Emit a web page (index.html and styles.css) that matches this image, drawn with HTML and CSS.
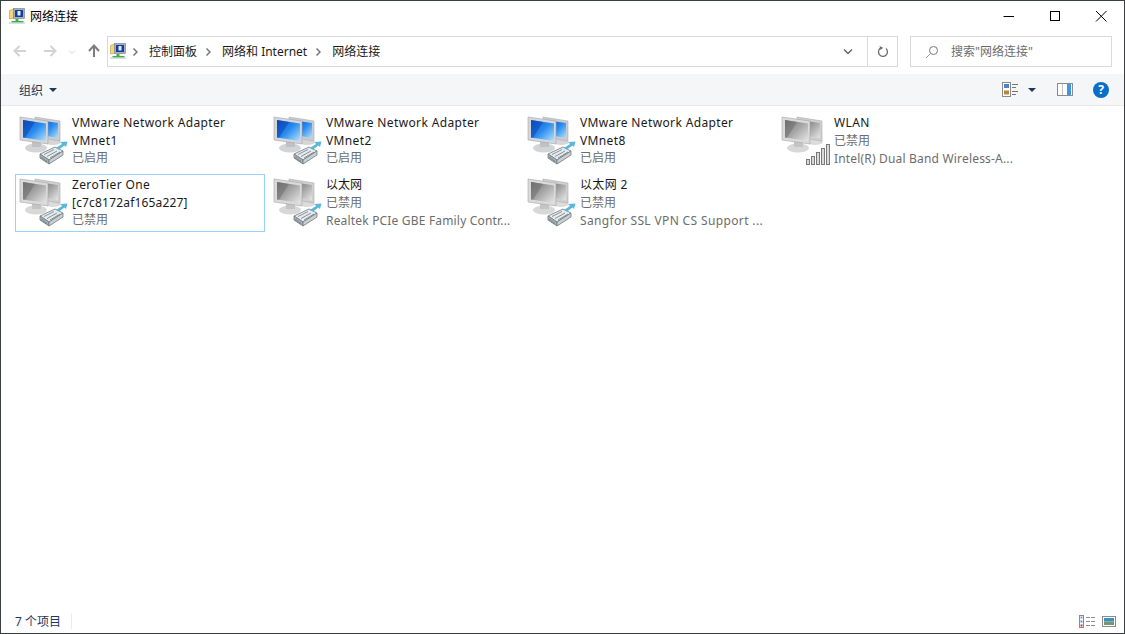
FILE: index.html
```html
<!DOCTYPE html>
<html lang="zh-CN">
<head>
    <meta charset="UTF-8">
    <title>网络连接</title>
    <link rel="stylesheet" href="styles.css">
</head>
<body>
    <!-- shared icons -->
    <svg class="defs" width="0" height="0">
        <defs>
            <linearGradient id="screenBlue" x1="0" y1="0" x2="1" y2="1">
                <stop offset="0" stop-color="#0a4fc4"/>
                <stop offset="0.5" stop-color="#2a8cf0"/>
                <stop offset="1" stop-color="#b4e2fb"/>
            </linearGradient>
            <linearGradient id="screenGray" x1="0" y1="0" x2="1" y2="1">
                <stop offset="0" stop-color="#6f6f6f"/>
                <stop offset="0.5" stop-color="#a8a8a8"/>
                <stop offset="1" stop-color="#e6e6e6"/>
            </linearGradient>
            <symbol id="pcBlue" viewBox="0 0 56 56">
                <ellipse cx="36" cy="29" rx="8" ry="3" fill="#d4d6d8"/>
                <path d="M18 4 L43 8 V28 L18 24 Z" fill="#c9ccd0" stroke="#a9adb2" stroke-width="0.6"/>
                <path d="M24 7.500 L41 10 V25 L24 22 Z" fill="url(#screenBlue)"/>
                <ellipse cx="19" cy="35" rx="11" ry="4.500" fill="#d2d4d6"/>
                <path d="M15 28 h9 v6 h-9 Z" fill="#bfc2c5"/>
                <path d="M3 4 L31 8 V31 L3 27 Z" fill="#d4d6d9" stroke="#a2a6ab" stroke-width="0.6"/>
                <path d="M6 7 L29 10.500 V28 L6 24.500 Z" fill="url(#screenBlue)"/>
                <path d="M6 7 L18 9 L8 24.800 L6 24.500 Z" fill="#0b46b4" opacity="0.55"/>
            </symbol>
            <symbol id="pcGray" viewBox="0 0 56 56">
                <ellipse cx="36" cy="29" rx="8" ry="3" fill="#dcdcdc"/>
                <path d="M18 4 L43 8 V28 L18 24 Z" fill="#d0d0d0" stroke="#ababab" stroke-width="0.6"/>
                <path d="M24 7.500 L41 10 V25 L24 22 Z" fill="url(#screenGray)"/>
                <ellipse cx="19" cy="35" rx="11" ry="4.500" fill="#d8d8d8"/>
                <path d="M15 28 h9 v6 h-9 Z" fill="#c4c4c4"/>
                <path d="M3 4 L31 8 V31 L3 27 Z" fill="#dadada" stroke="#a6a6a6" stroke-width="0.6"/>
                <path d="M6 7 L29 10.500 V28 L6 24.500 Z" fill="url(#screenGray)"/>
                <path d="M6 7 L18 9 L8 24.800 L6 24.500 Z" fill="#707070" opacity="0.55"/>
            </symbol>
            <symbol id="plug" viewBox="0 0 56 56">
                <path d="M23 41 L38 34 L46 38 L32 47 Z" fill="#e6ebee" stroke="#6f7a80" stroke-width="0.8"/>
                <path d="M23 41 V45 L32 51 V47 Z" fill="#aab2b7" stroke="#6f7a80" stroke-width="0.8"/>
                <path d="M32 47 V51 L46 42 V38 Z" fill="#c9d0d4" stroke="#6f7a80" stroke-width="0.8"/>
                <path d="M27 41.500 L37 36.500 M30 43.500 L40 38 M33 45 L43 39" stroke="#6f7a80" stroke-width="0.8" fill="none"/>
                <path d="M25 44 v2 M27 45.500 v2 M29 47 v2" stroke="#5d676d" stroke-width="0.8" fill="none"/>
                <path d="M39 35 L45 31 L43.500 29 L50.500 28.500 L49 34 L47.500 32.500 L42 36.500 Z" fill="#59b7de"/>
            </symbol>
            <symbol id="signal" viewBox="0 0 56 56">
                <g fill="#d9d9d9" stroke="#7a7a7a" stroke-width="1">
                    <rect x="27.500" y="46.500" width="3" height="5"/>
                    <rect x="32.500" y="43.500" width="3" height="8"/>
                    <rect x="37.500" y="39.500" width="3" height="12"/>
                    <rect x="42.500" y="35.500" width="3" height="16"/>
                    <rect x="47.500" y="31.500" width="3" height="20"/>
                </g>
            </symbol>
            <symbol id="netSmall" viewBox="0 0 16 16">
                <path d="M0.500 2.500 L5 1 V10 L0.500 11 Z" fill="#f4d774" stroke="#b89a3c" stroke-width="0.6"/>
                <rect x="4.500" y="0.500" width="11" height="10" fill="#a9aeb6" stroke="#757c86" stroke-width="0.6"/>
                <rect x="6" y="2" width="8" height="7" fill="#123e9c"/>
                <rect x="8.500" y="3" width="3" height="4.500" fill="#dfe9f7"/>
                <path d="M6.500 11 h3 v2 h5 v1.500 h-12 v-1.500 h4 Z" fill="#37b24d"/>
                <rect x="0" y="14.500" width="16" height="1.200" fill="#b8bcc0" opacity="0.7"/>
            </symbol>
            <symbol id="chev" viewBox="0 0 6 8">
                <path d="M1.500 0.500 L5 4 L1.500 7.500" fill="none" stroke="#777" stroke-width="1.500"/>
            </symbol>
        </defs>
    </svg>

    <div class="window">
        <div class="titlebar">
            <svg class="small-icon"><use href="#netSmall"/></svg>
            <span class="title">网络连接</span>
            <div class="win-btns">
                <svg class="win-btn" viewBox="0 0 46 30"><path d="M17.500 15.500 H28" stroke="#000" fill="none"/></svg>
                <svg class="win-btn" viewBox="0 0 46 30"><rect x="18.500" y="10.500" width="9" height="9" stroke="#000" fill="none"/></svg>
                <svg class="win-btn" viewBox="0 0 46 30"><path d="M18 10 L28.500 20.500 M28.500 10 L18 20.500" stroke="#000" fill="none"/></svg>
            </div>
        </div>

        <div class="navbar">
            <div class="nav-btns">
                <svg class="nav-arrow" viewBox="0 0 16 16"><path d="M14 8 H3 M7.500 3 L2.500 8 L7.500 13" class="arrow-off"/></svg>
                <svg class="nav-arrow" viewBox="0 0 16 16"><path d="M2 8 H13 M8.500 3 L13.500 8 L8.500 13" class="arrow-off"/></svg>
                <svg class="nav-drop" viewBox="0 0 8 8"><path d="M1 2.500 L4 5.500 L7 2.500" class="arrow-off thin"/></svg>
                <svg class="nav-arrow up" viewBox="0 0 16 16"><path d="M8 14 V3 M3 8 L8 2.500 L13 8" class="arrow-on"/></svg>
            </div>
            <div class="address">
                <svg class="small-icon"><use href="#netSmall"/></svg>
                <svg class="crumb-sep first"><use href="#chev"/></svg>
                <span class="crumb">控制面板</span>
                <svg class="crumb-sep"><use href="#chev"/></svg>
                <span class="crumb">网络和 Internet</span>
                <svg class="crumb-sep"><use href="#chev"/></svg>
                <span class="crumb">网络连接</span>
                <svg class="addr-drop" viewBox="0 0 10 8"><path d="M1 1.500 L5 5.500 L9 1.500" fill="none" stroke="#666" stroke-width="1.500"/></svg>
                <div class="refresh">
                    <svg viewBox="0 0 12 12" width="12" height="12"><path d="M4 1.800 A4.500 4.500 0 1 0 9 2.500" fill="none" stroke="#6d6d6d" stroke-width="1.300"/><path d="M2.500 0 L6 1.800 L3.500 4 Z" fill="#6d6d6d"/></svg>
                </div>
            </div>
            <div class="search">
                <svg class="search-icon" viewBox="0 0 14 14"><circle cx="8.500" cy="5.500" r="4" fill="none" stroke="#777"/><path d="M5.500 8.500 L1 13" stroke="#999" fill="none"/></svg>
                <span class="search-text">搜索"网络连接"</span>
            </div>
        </div>

        <div class="toolbar">
            <span class="org">组织</span>
            <span class="caret"></span>
            <div class="tool-right">
                <svg class="tool-views" viewBox="0 0 17 15">
                    <rect x="0.500" y="0.500" width="8" height="14" fill="#fff" stroke="#8b8b8b"/>
                    <rect x="2" y="2" width="5" height="4" fill="#4a86c5"/>
                    <rect x="2" y="8.500" width="5" height="4" fill="#b5893c"/>
                    <path d="M10 2.500 H16 M10 5.500 H14 M10 9.500 H16 M10 12.500 H14" stroke="#777"/>
                </svg>
                <span class="caret view-caret"></span>
                <svg class="tool-pane" viewBox="0 0 16 13">
                    <rect x="0.500" y="0.500" width="15" height="12" fill="#fff" stroke="#8b8b8b"/>
                    <rect x="10" y="1" width="4" height="11" fill="#3f95e6"/>
                    <path d="M5.500 1 V12" stroke="#c4c4c4"/>
                </svg>
                <div class="help">?</div>
            </div>
        </div>

        <div class="items">
            <div class="item">
                <div class="item-icon"><svg><use href="#pcBlue"/><use href="#plug"/></svg></div>
                <div class="item-text"><div class="name wide">VMware Network Adapter</div><div class="name wide">VMnet1</div><div class="sub">已启用</div></div>
            </div>
            <div class="item">
                <div class="item-icon"><svg><use href="#pcBlue"/><use href="#plug"/></svg></div>
                <div class="item-text"><div class="name wide">VMware Network Adapter</div><div class="name wide">VMnet2</div><div class="sub">已启用</div></div>
            </div>
            <div class="item">
                <div class="item-icon"><svg><use href="#pcBlue"/><use href="#plug"/></svg></div>
                <div class="item-text"><div class="name wide">VMware Network Adapter</div><div class="name wide">VMnet8</div><div class="sub">已启用</div></div>
            </div>
            <div class="item">
                <div class="item-icon"><svg><use href="#pcGray"/><use href="#signal"/></svg></div>
                <div class="item-text"><div class="name wide">WLAN</div><div class="sub">已禁用</div><div class="sub tight detail">Intel(R) Dual Band Wireless-A...</div></div>
            </div>
            <div class="item selected">
                <div class="item-icon"><svg><use href="#pcGray"/><use href="#plug"/></svg></div>
                <div class="item-text"><div class="name wide">ZeroTier One</div><div class="name tight">[c7c8172af165a227]</div><div class="sub">已禁用</div></div>
            </div>
            <div class="item">
                <div class="item-icon"><svg><use href="#pcGray"/><use href="#plug"/></svg></div>
                <div class="item-text"><div class="name">以太网</div><div class="sub">已禁用</div><div class="sub tight detail">Realtek PCIe GBE Family Contr...</div></div>
            </div>
            <div class="item">
                <div class="item-icon"><svg><use href="#pcGray"/><use href="#plug"/></svg></div>
                <div class="item-text"><div class="name wide">以太网 2</div><div class="sub">已禁用</div><div class="sub wide detail">Sangfor SSL VPN CS Support ...</div></div>
            </div>
        </div>

        <div class="statusbar">
            <span class="count">7 个项目</span>
            <span class="status-sep"></span>
            <div class="status-right">
                <svg class="status-details" viewBox="0 0 16 13">
                    <rect x="0.500" y="0.500" width="4" height="12" fill="#fff" stroke="#8b8b8b"/>
                    <rect x="1.500" y="1.500" width="2" height="2" fill="#9a9a9a"/>
                    <rect x="1.500" y="5.500" width="2" height="2" fill="#4a90d9"/>
                    <rect x="1.500" y="9.500" width="2" height="2" fill="#c0392b"/>
                    <path d="M7 2.500 H11 M12 2.500 H16 M7 6.500 H11 M12 6.500 H16 M7 10.500 H11 M12 10.500 H16" stroke="#8f8f8f"/>
                </svg>
                <svg class="status-large" viewBox="0 0 14 11">
                    <rect x="0.500" y="0.500" width="13" height="10" fill="#fff" stroke="#8b8b8b"/>
                    <rect x="2" y="2" width="10" height="3.500" fill="#3f8fc4"/>
                    <rect x="2" y="5.500" width="10" height="3.500" fill="#6f9a70"/>
                </svg>
            </div>
        </div>
    </div>
</body>
</html>
```

FILE: styles.css
```css
* {
    box-sizing: border-box;
}
html, body {
    height: 100%;
    margin: 0;
}
body {
    font-family: "Noto Sans", "Noto Sans CJK SC", sans-serif;
    font-size: 12px;
    color: #000;
    background: #fff;
    overflow: hidden;
}
.defs {
    display: block;
    height: 0;
}
.window {
    display: flex;
    flex-direction: column;
    height: 634px;
    border: 1px solid #3a3f44;
    border-top-color: #39413f;
    background: #fff;
}
.small-icon {
    width: 16px;
    height: 16px;
    flex: none;
}

/* title bar */
.titlebar {
    display: flex;
    align-items: center;
    height: 30px;
    padding-left: 8px;
}
.title {
    margin-left: 5px;
}
.win-btns {
    display: flex;
    margin-left: auto;
}
.win-btn {
    width: 46px;
    height: 30px;
    display: block;
}

/* address row */
.navbar {
    display: flex;
    align-items: center;
    height: 31px;
    margin-top: 5px;
    padding-right: 12px;
}
.nav-btns {
    display: flex;
    align-items: center;
    width: 106px;
    flex: none;
    padding-left: 11px;
}
.nav-arrow {
    width: 16px;
    height: 16px;
    margin-bottom: 2px;
}
.nav-arrow + .nav-arrow {
    margin-left: 14px;
}
.nav-drop {
    width: 8px;
    height: 8px;
    margin: 0 10px 0 10px;
}
.arrow-off, .arrow-on {
    fill: none;
    stroke-width: 2;
}
.arrow-off {
    stroke: #d3d3d3;
}
.arrow-on {
    stroke: #7d7d7d;
}
.thin {
    stroke-width: 1;
}
.address {
    display: flex;
    align-items: center;
    width: 791px;
    height: 31px;
    border: 1px solid #d9d9d9;
    padding-left: 2px;
}
.address .small-icon {
    margin-bottom: 2px;
}
.crumb {
    color: #1a1a1a;
    margin-bottom: 2px;
}
.crumb-sep {
    flex: none;
    width: 6px;
    height: 8px;
    margin: 0 11px 0 8px;
}
.crumb-sep.first {
    margin-left: 6px;
}
.crumb-sep use {
    width: 6px;
    height: 8px;
}
.addr-drop {
    width: 10px;
    height: 8px;
    margin-left: auto;
    margin-right: 14px;
}
.refresh {
    display: flex;
    align-items: center;
    justify-content: center;
    width: 30px;
    height: 29px;
    border-left: 1px solid #d9d9d9;
}
.search {
    display: flex;
    align-items: center;
    width: 202px;
    height: 31px;
    margin-left: 12px;
    border: 1px solid #d9d9d9;
    padding-left: 14px;
    color: #6d6d6d;
}
.search-icon {
    width: 14px;
    height: 14px;
    margin-right: 12px;
}
.search-text {
    margin-bottom: 2px;
}

/* command bar */
.toolbar {
    display: flex;
    align-items: center;
    height: 32px;
    margin-top: 7px;
    padding-left: 18px;
    padding-right: 15px;
    background: #f5f6f7;
    border-bottom: 1px solid #e8e9ea;
}
.org {
    color: #1e395b;
}
.caret {
    width: 0;
    height: 0;
    margin-left: 6px;
    border-left: 4px solid transparent;
    border-right: 4px solid transparent;
    border-top: 4px solid #1e395b;
}
.tool-right {
    display: flex;
    align-items: center;
    margin-left: auto;
}
.tool-views {
    width: 17px;
    height: 15px;
}
.view-caret {
    margin-left: 9px;
}
.tool-pane {
    width: 16px;
    height: 13px;
    margin-left: 21px;
}
.help {
    width: 16px;
    height: 16px;
    margin-left: 20px;
    border-radius: 50%;
    background: #0a6fc9;
    color: #fff;
    font-weight: 700;
    font-size: 12px;
    line-height: 16px;
    text-align: center;
}

/* connection list */
.items {
    flex: 1;
    display: grid;
    grid-template-columns: repeat(4, 250px);
    grid-auto-rows: 58px;
    column-gap: 4px;
    row-gap: 4px;
    align-content: start;
    padding: 6px 0 0 14px;
}
.item {
    display: flex;
    border: 1px solid transparent;
    padding: 1px 0 0 2px;
}
.item.selected {
    border-color: #99d1ff;
}
.item-icon {
    width: 54px;
    flex: none;
}
.item-icon svg {
    display: block;
    width: 56px;
    height: 56px;
    margin: -1px 0 0 -1px;
}
.item-icon svg use {
    width: 56px;
    height: 56px;
}
.item-text {
    line-height: 17.500px;
    white-space: nowrap;
}
.name {
    color: #1a1a1a;
}
.sub {
    color: #6d6d6d;
}
.wide {
    letter-spacing: 0.36px;
}
.tight {
    letter-spacing: 0.18px;
}
.detail {
    margin-top: 1px;
}

/* status bar */
.statusbar {
    display: flex;
    align-items: center;
    height: 24px;
    padding-left: 14px;
    padding-right: 8px;
}
.count {
    color: #1e395b;
}
.status-sep {
    width: 1px;
    height: 16px;
    margin-left: 10px;
    background: #ececec;
}
.status-right {
    display: flex;
    align-items: center;
    margin-left: auto;
}
.status-details {
    width: 16px;
    height: 13px;
}
.status-large {
    width: 14px;
    height: 11px;
    margin-left: 7px;
}
```
